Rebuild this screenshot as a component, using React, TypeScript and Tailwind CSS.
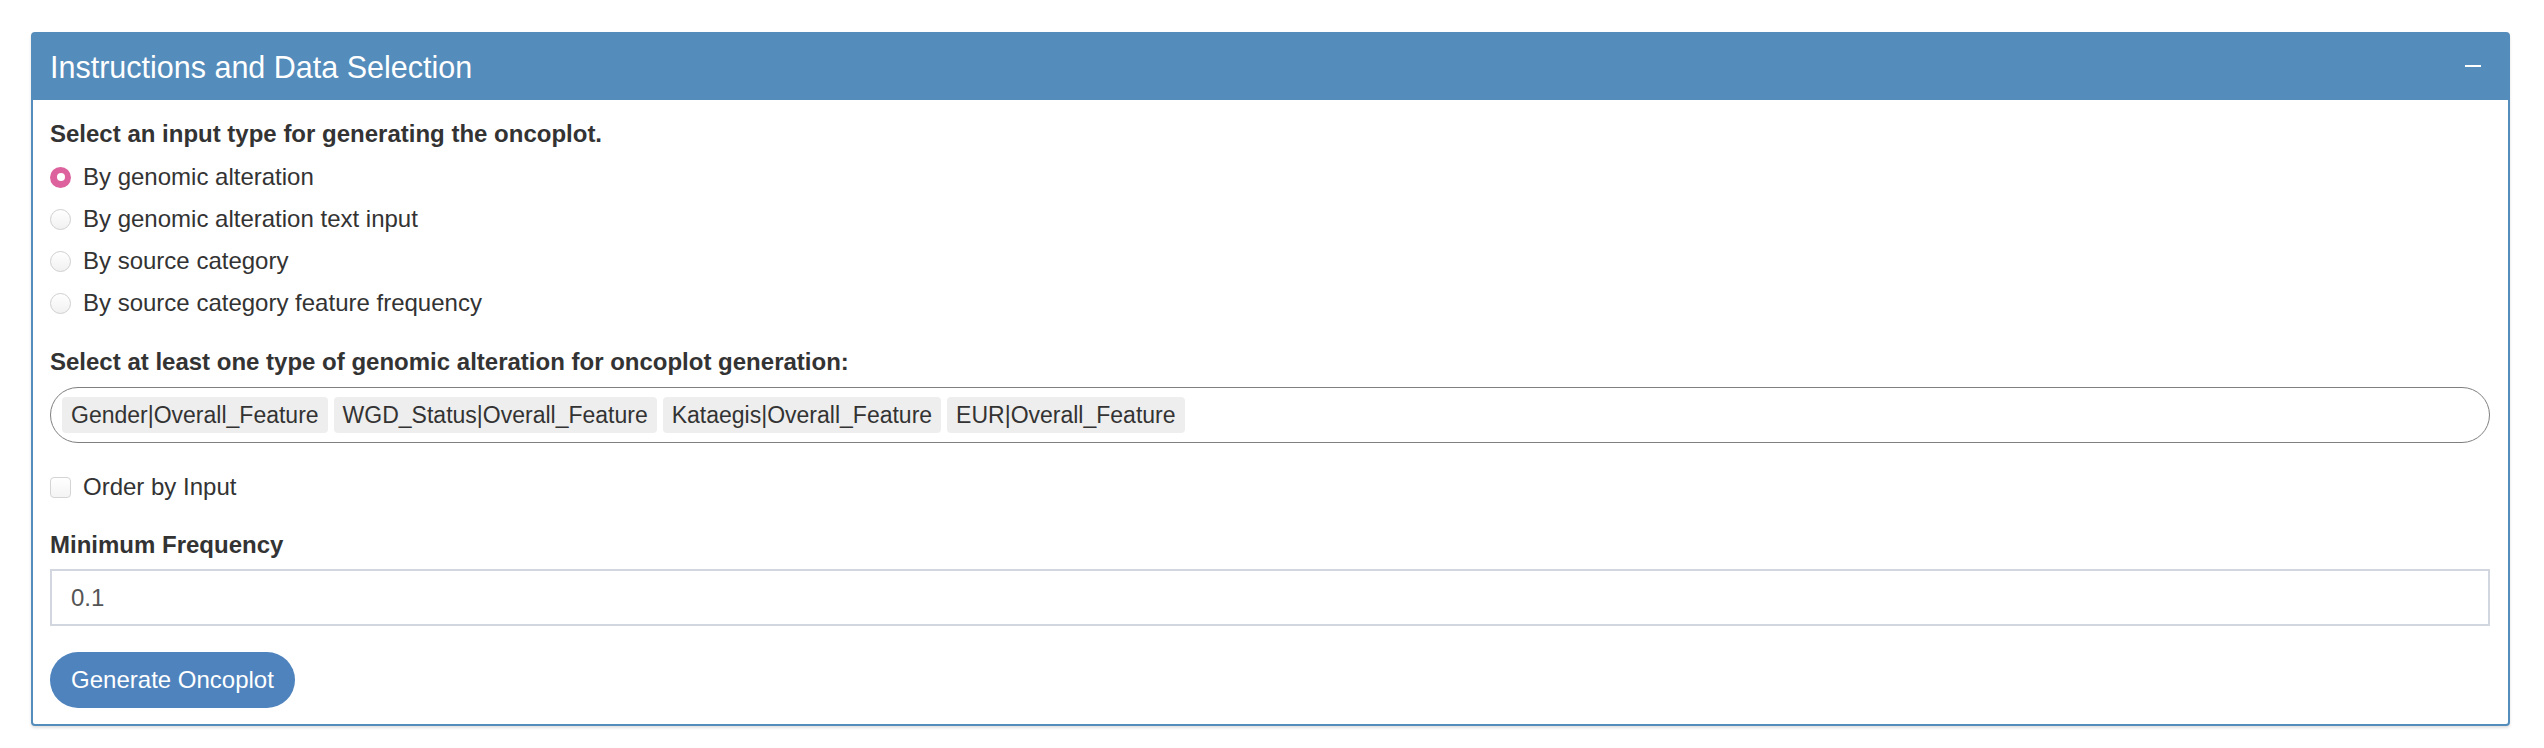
const options = [
  "By genomic alteration",
  "By genomic alteration text input",
  "By source category",
  "By source category feature frequency",
];

const tags = [
  "Gender|Overall_Feature",
  "WGD_Status|Overall_Feature",
  "Kataegis|Overall_Feature",
  "EUR|Overall_Feature",
];

function Radio({ checked }: { checked: boolean }) {
  if (checked) {
    return (
      <span className="flex h-[21px] w-[21px] items-center justify-center rounded-full bg-[#dc619c]">
        <span className="h-[8px] w-[8px] rounded-full bg-white" />
      </span>
    );
  }
  return (
    <span className="h-[21px] w-[21px] rounded-full border border-[#cfcfcf] bg-gradient-to-b from-white to-[#f1f1f1]" />
  );
}

export default function App() {
  return (
    <div
      className="min-h-screen bg-white pt-[32px] pl-[31px] pr-[34px] text-[#333]"
      style={{ fontFamily: '"Liberation Sans", Arial, sans-serif' }}
    >
      <div className="rounded-[4px] border-2 border-[#548cbb] bg-white shadow-[0_2px_3px_rgba(0,0,0,0.12)]">
        {/* header */}
        <div className="flex h-[66px] items-center justify-between bg-[#548cbb] pl-[17px] pr-[27px]">
          <h3 className="text-[30.5px] leading-none text-white">Instructions and Data Selection</h3>
          <span className="mt-[-2px] h-[2px] w-[16px] bg-white" />
        </div>

        {/* body */}
        <div className="pt-[18px] pb-[16px] pl-[17px] pr-[18px] text-[24px] leading-[32px]">
          <div className="font-bold">Select an input type for generating the oncoplot.</div>
          <div className="mt-[6px]">
            {options.map((o, i) => (
              <label key={o} className="flex h-[42px] items-center gap-[12px]">
                <Radio checked={i === 0} />
                <span>{o}</span>
              </label>
            ))}
          </div>

          <div className="mt-[22px] font-bold">
            Select at least one type of genomic alteration for oncoplot generation:
          </div>
          <div className="mt-[9px] flex h-[56px] items-center gap-[6px] rounded-full border-[1.5px] border-[#808080] pl-[11px] text-[23px]">
            {tags.map((t) => (
              <span key={t} className="flex h-[36px] items-center rounded-[4px] bg-[#eeeeee] px-[9px]">
                {t}
              </span>
            ))}
          </div>

          <label className="mt-[23px] flex h-[42px] items-center gap-[12px]">
            <span className="h-[21px] w-[21px] rounded-[4px] border border-[#d4d4d4] bg-gradient-to-b from-white to-[#f4f4f4]" />
            <span>Order by Input</span>
          </label>

          <div className="mt-[21px] font-bold">Minimum Frequency</div>
          <div className="mt-[8px] flex h-[57px] items-center border-2 border-[#d2d6de] pl-[19px] text-[#555]">
            0.1
          </div>

          <button className="mt-[26px] flex h-[56px] w-[245px] items-center justify-center rounded-full bg-[#4e83be] text-white">
            Generate Oncoplot
          </button>
        </div>
      </div>
    </div>
  );
}
